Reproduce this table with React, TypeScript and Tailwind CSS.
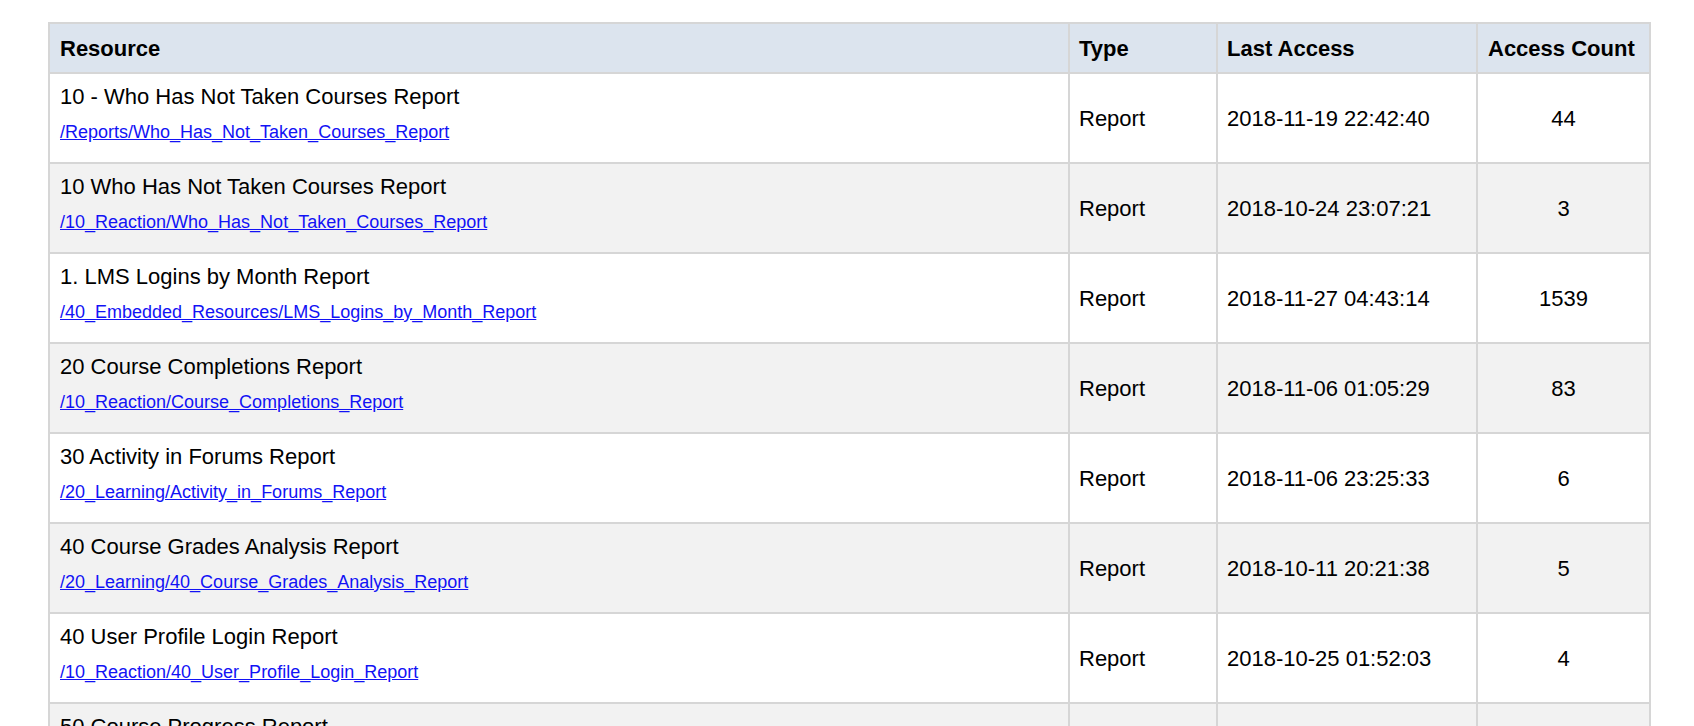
import React from "react";

// ------------------------
// Types
// ------------------------
interface ResourceRow {
  name: string;
  path: string;
  type: string;
  lastAccess: string;
  count: number;
}

const rows: ResourceRow[] = [
  {
    name: "10 - Who Has Not Taken Courses Report",
    path: "/Reports/Who_Has_Not_Taken_Courses_Report",
    type: "Report",
    lastAccess: "2018-11-19 22:42:40",
    count: 44,
  },
  {
    name: "10 Who Has Not Taken Courses Report",
    path: "/10_Reaction/Who_Has_Not_Taken_Courses_Report",
    type: "Report",
    lastAccess: "2018-10-24 23:07:21",
    count: 3,
  },
  {
    name: "1. LMS Logins by Month Report",
    path: "/40_Embedded_Resources/LMS_Logins_by_Month_Report",
    type: "Report",
    lastAccess: "2018-11-27 04:43:14",
    count: 1539,
  },
  {
    name: "20 Course Completions Report",
    path: "/10_Reaction/Course_Completions_Report",
    type: "Report",
    lastAccess: "2018-11-06 01:05:29",
    count: 83,
  },
  {
    name: "30 Activity in Forums Report",
    path: "/20_Learning/Activity_in_Forums_Report",
    type: "Report",
    lastAccess: "2018-11-06 23:25:33",
    count: 6,
  },
  {
    name: "40 Course Grades Analysis Report",
    path: "/20_Learning/40_Course_Grades_Analysis_Report",
    type: "Report",
    lastAccess: "2018-10-11 20:21:38",
    count: 5,
  },
  {
    name: "40 User Profile Login Report",
    path: "/10_Reaction/40_User_Profile_Login_Report",
    type: "Report",
    lastAccess: "2018-10-25 01:52:03",
    count: 4,
  },
  {
    name: "50 Course Progress Report",
    path: "/10_Reaction/50_Course_Progress_Report",
    type: "Report",
    lastAccess: "2018-11-02 18:14:09",
    count: 12,
  },
];

export default function App() {
  return (
    <div className="min-h-screen bg-white pl-[48px] pt-[22px] font-['Liberation_Sans',Arial,sans-serif] text-black">
      <table className="w-[1601px] table-fixed border-collapse border-2 border-[#d6d6d6]">
        <colgroup>
          <col className="w-[1020px]" />
          <col className="w-[148px]" />
          <col className="w-[260px]" />
          <col className="w-[173px]" />
        </colgroup>
        <thead>
          <tr className="h-[50px] bg-[#dce4ee]">
            <th className="border-2 border-[#d6d6d6] px-[10px] text-left text-[22px] font-bold">Resource</th>
            <th className="border-2 border-[#d6d6d6] px-[9px] text-left text-[22px] font-bold">Type</th>
            <th className="border-2 border-[#d6d6d6] px-[9px] text-left text-[22px] font-bold">Last Access</th>
            <th className="border-2 border-[#d6d6d6] px-[10px] text-left text-[22px] font-bold">Access Count</th>
          </tr>
        </thead>
        <tbody>
          {rows.map((r, i) => (
            <tr key={r.path} className={`h-[90px] ${i % 2 === 1 ? "bg-[#f2f2f2]" : "bg-white"}`}>
              <td className="border-2 border-[#d6d6d6] px-[10px] pt-[10px] align-top">
                <div className="text-[22px] leading-[25px]">{r.name}</div>
                <a href="#" className="mt-[13px] block text-[18px] leading-[21px] text-[#1212f5] underline">
                  {r.path}
                </a>
              </td>
              <td className="border-2 border-[#d6d6d6] px-[9px] text-[22px]">{r.type}</td>
              <td className="border-2 border-[#d6d6d6] px-[9px] text-[22px]">{r.lastAccess}</td>
              <td className="border-2 border-[#d6d6d6] px-[10px] text-center text-[22px]">{r.count}</td>
            </tr>
          ))}
        </tbody>
      </table>
    </div>
  );
}
